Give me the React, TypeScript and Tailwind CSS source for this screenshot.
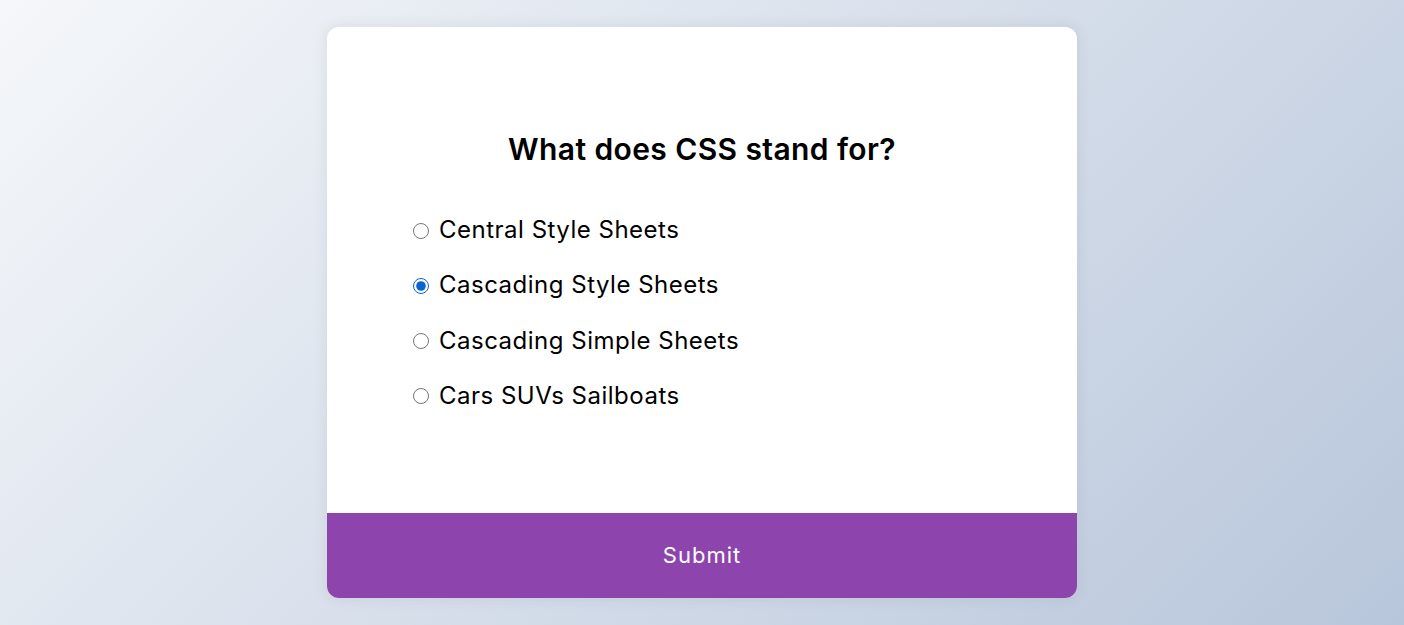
import React, { useState } from 'react';

const answers = [
  { id: 'a', text: 'Central Style Sheets' },
  { id: 'b', text: 'Cascading Style Sheets' },
  { id: 'c', text: 'Cascading Simple Sheets' },
  { id: 'd', text: 'Cars SUVs Sailboats' },
];

export default function App() {
  const [picked, setPicked] = useState('b');
  return (
    <div className="h-screen overflow-hidden flex items-center justify-center bg-[linear-gradient(315deg,#b8c6db_0%,#f5f7fa_100%)] font-['Inter',sans-serif]">
      <div className="w-[750px] bg-white rounded-[12px] overflow-hidden shadow-[0_0_12px_2px_rgba(100,100,100,0.1)]">
        <div className="p-[80px]">
          <h2 className="text-[30px] leading-[45px] font-semibold tracking-[0.4px] text-center text-black py-[20px]">What does CSS stand for?</h2>
          <ul className="my-[20px]">
            {answers.map(a => (
              <li key={a.id} className="text-[24px] leading-[34.25px] pt-[1px] my-[20px] flex items-center text-black tracking-[0.5px]">
                <input
                  type="radio"
                  name="answer"
                  id={a.id}
                  checked={picked === a.id}
                  onChange={() => setPicked(a.id)}
                  className="w-[16px] h-[16px] ml-[6px] mr-[4px] mt-[1px] accent-[#0b63d2]"
                />
                <label htmlFor={a.id} className="cursor-pointer pl-[6px]">{a.text}</label>
              </li>
            ))}
          </ul>
        </div>
        <button className="block w-full bg-[#8e44ad] text-white text-[22px] leading-[33px] tracking-[1px] py-[26px] cursor-pointer">Submit</button>
      </div>
    </div>
  );
}
